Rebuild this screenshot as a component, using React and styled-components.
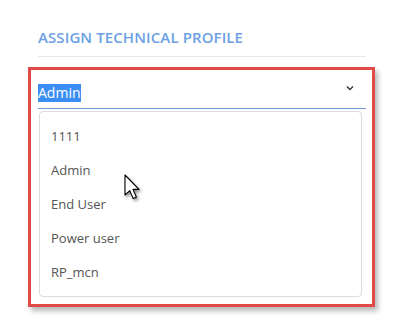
import React from 'react'
import styled, { createGlobalStyle } from 'styled-components'

const profiles = ['1111', 'Admin', 'End User', 'Power user', 'RP_mcn']

function App() {
  return (
    <Page>
      <GlobalStyle />
      <Title>ASSIGN TECHNICAL PROFILE</Title>
      <Divider />
      <Highlight>
        <SelectRow>
          <Selected>Admin</Selected>
          <Chevron width="8" height="6" viewBox="0 0 8 6">
            <path d="M1 1.5 L4 4.5 L7 1.5" fill="none" stroke="#333" strokeWidth="1.4" />
          </Chevron>
        </SelectRow>
        <Options>
          {profiles.map((p) => (
            <Option key={p}>{p}</Option>
          ))}
        </Options>
      </Highlight>
      {/* mouse pointer hovering the list */}
      <Pointer width="20" height="30" viewBox="0 0 20 30">
        <defs>
          <filter id="sh" x="-50%" y="-50%" width="200%" height="200%">
            <feDropShadow dx="1.5" dy="2" stdDeviation="1.5" floodColor="#000" floodOpacity="0.45" />
          </filter>
        </defs>
        <path
          d="M1 1 L1 21 L5.8 16.6 L9.2 24.6 L12.4 23.2 L9 15.4 L15 15.4 Z"
          fill="#fff"
          stroke="#000"
          strokeWidth="1.1"
          strokeLinejoin="round"
          filter="url(#sh)"
        />
      </Pointer>
    </Page>
  )
}

const GlobalStyle = createGlobalStyle`
  body {
    margin: 0;
    background: #fff;
    font-family: "Open Sans", "Liberation Sans", sans-serif;
  }
`

const Page = styled.div`
  position: relative;
  width: 393px;
  height: 324px;
  box-sizing: border-box;
  padding: 27px 0 0 28px;
`

const Title = styled.div`
  margin: 0 0 0 10px;
  width: 328px;
  font-size: 15px;
  line-height: 20px;
  font-weight: 600;
  color: #6c9fe3;
  letter-spacing: 0.1px;
`

const Divider = styled.div`
  margin: 9px 0 0 10px;
  width: 328px;
  height: 1px;
  background: #e6e8eb;
`

const Highlight = styled.div`
  margin-top: 10px;
  width: 347px;
  height: 240px;
  box-sizing: border-box;
  border: 3px solid #e24a4a;
  padding: 0 6px 0 7px;
  box-shadow: 3px 4px 5px rgba(0, 0, 0, 0.28);
`

const SelectRow = styled.div`
  display: flex;
  align-items: center;
  justify-content: space-between;
  padding: 14px 12px 6px 0;
  border-bottom: 1px solid #6e9ad8;
`

const Selected = styled.span`
  display: inline-block;
  font-size: 14px;
  line-height: 18px;
  color: #fff;
  background: #3b8ef3;
`

const Chevron = styled.svg`
  display: block;
  margin-top: -10px;
`

const Options = styled.ul`
  list-style: none;
  margin: 2px 4px 0 1px;
  padding: 7px 0;
  border: 1px solid #dcdcdc;
  border-radius: 4px;
`

const Option = styled.li`
  padding-left: 11px;
  font-size: 13px;
  line-height: 34px;
  color: #555;
`

const Pointer = styled.svg`
  position: absolute;
  left: 124px;
  top: 174px;
`

export default App
